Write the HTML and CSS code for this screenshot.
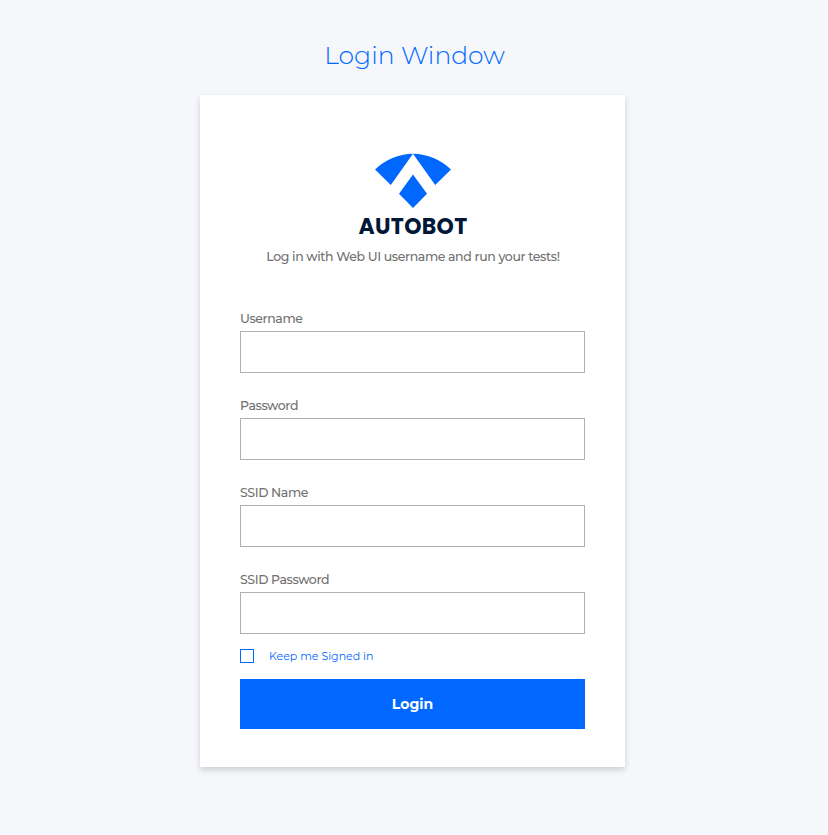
FILE: index.html
```html
<!DOCTYPE html>
<html lang="en">
<head>
<meta charset="utf-8">
<title>Login Window</title>
<link rel="stylesheet" href="styles.css">
</head>
<body>
<h1 class="title">Login Window</h1>
<main class="card">
  <header class="brand">
    <svg class="mark" viewBox="0 0 76 55" aria-hidden="true">
      <path d="M0 16.5Q16 1.2 38 .7L15.8 32ZM76 16.5Q60 1.2 38 .7L60.2 32Z"/>
      <path d="M38 21.5L52 40.7 38 55 24 40.7Z"/>
    </svg>
    <div class="wordmark">AUTOBOT</div>
    <p class="intro">Log in with Web UI username and run your tests!</p>
  </header>
  <form class="form">
    <div class="field"><label for="user">Username</label><input id="user" type="text"></div>
    <div class="field"><label for="pass">Password</label><input id="pass" type="password"></div>
    <div class="field"><label for="ssid">SSID Name</label><input id="ssid" type="text"></div>
    <div class="field"><label for="ssidpass">SSID Password</label><input id="ssidpass" type="password"></div>
    <label class="keep"><input type="checkbox"><span>Keep me Signed in</span></label>
    <button class="submit" type="button">Login</button>
  </form>
</main>
</body>
</html>
```
FILE: styles.css
```css
* { box-sizing: border-box; }
body {
  margin: 0;
  min-height: 835px;
  padding-top: 37px;
  background: #f5f7fb;
  font-family: Montserrat, Inter, "Liberation Sans", sans-serif;
  color: #707070;
}
.title {
  margin: 0 0 22px;
  padding-left: 1px;
  text-align: center;
  font-size: 25px;
  line-height: 36px;
  font-weight: 300;
  color: #0068ff;
}
.card {
  width: 425px;
  height: 672px;
  margin-left: 200px;
  padding: 58px 40px 0;
  background: #fff;
  box-shadow: 0 3px 6px rgba(0, 0, 0, .16);
}
.brand {
  display: flex;
  flex-direction: column;
  align-items: center;
  height: 157px;
}
.mark { width: 76px; height: 55px; fill: #0068ff; }
.wordmark {
  margin-top: 6px;
  padding-left: 1px;
  font: 700 22px/26px Poppins, Inter, sans-serif;
  letter-spacing: .3px;
  color: #001737;
}
.intro {
  margin: 7px 0 0;
  padding-left: 1px;
  font-size: 12.5px;
  line-height: 19px;
  font-weight: 500;
  letter-spacing: -.37px;
  white-space: nowrap;
}
.form { display: flex; flex-direction: column; }
.field { height: 87px; }
.field label {
  display: block;
  height: 21px;
  font-size: 12.5px;
  line-height: 17px;
  font-weight: 500;
  letter-spacing: -.4px;
}
.field input {
  display: block;
  width: 345px;
  height: 42px;
  border: 1px solid #b1b1b1;
  border-radius: 0;
  background: #fff;
  padding: 0 12px;
}
.keep {
  display: flex;
  align-items: center;
  gap: 15px;
  height: 14px;
  margin-top: -9px;
  font-size: 11px;
  color: #0068ff;
}
.keep input {
  appearance: none;
  width: 14px;
  height: 14px;
  margin: 0;
  border: 1px solid #0068ff;
}
.submit {
  width: 345px;
  height: 50px;
  margin-top: 16px;
  padding: 0;
  border: 0;
  background: #0068ff;
  color: #fff;
  font: 700 14px/50px Montserrat, Inter, "Liberation Sans", sans-serif;
}
```
